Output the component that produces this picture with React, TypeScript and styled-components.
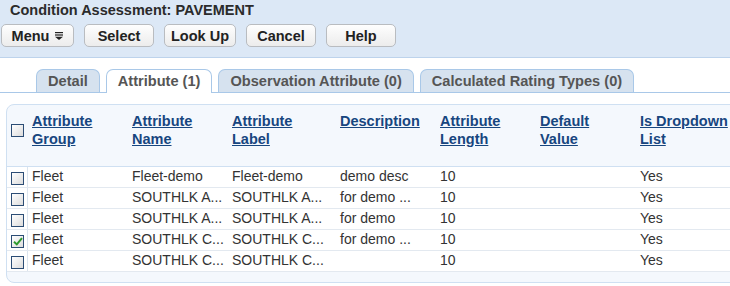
import React from "react";
import styled, { createGlobalStyle } from "styled-components";

const Global = createGlobalStyle`
  html, body { margin: 0; padding: 0; background: #ffffff; overflow: hidden; }
  body { font-family: "Liberation Sans", Arial, sans-serif; color: #333; }
  * { box-sizing: border-box; }
`;

const Page = styled.div`
  width: 730px;
  height: 286px;
  overflow: hidden;
`;

const Header = styled.div`
  background: #dce8f6;
  border-bottom: 1px solid #bdd3ec;
  padding: 1px 0 10px 0;
`;

const Title = styled.div`
  padding-left: 10px;
  font-size: 14.5px;
  font-weight: bold;
  line-height: 18px;
  color: #2b2b2b;
  margin-bottom: 5px;
`;

const Toolbar = styled.div`
  display: flex;
  gap: 10px;
  padding-left: 1px;
`;

const Button = styled.button<{ $w: number }>`
  width: ${(p) => p.$w}px;
  height: 23px;
  padding: 0;
  border: 1px solid #b9bcc0;
  border-radius: 5px;
  background: linear-gradient(#fefefe, #ececec);
  font-family: "Liberation Sans", Arial, sans-serif;
  font-size: 14.5px;
  font-weight: bold;
  color: #222;
  display: flex;
  align-items: center;
  justify-content: center;
  gap: 6px;
`;

const Tabs = styled.div`
  margin-top: 11px;
  display: flex;
  gap: 6px;
  padding-left: 36px;
  border-bottom: 1px solid #a9c8e8;
  height: 24px;
`;

const Tab = styled.div<{ $active?: boolean }>`
  height: ${(p) => (p.$active ? "24px" : "23px")};
  padding: 0 11px;
  border: 1px solid #a9c8e8;
  border-bottom: none;
  border-radius: 7px 7px 0 0;
  background: ${(p) => (p.$active ? "#ffffff" : "#d6e2ef")};
  font-size: 14.6px;
  font-weight: bold;
  color: #555;
  line-height: 22px;
  white-space: nowrap;
`;

const Panel = styled.div`
  margin: 11px -20px 0 6px;
  border: 1px solid #cfe0f2;
  border-radius: 8px 0 0 8px;
  background: #f4f8fd;
  padding-bottom: 10px;
`;

const cols = "21px 100px 100px 108px 100px 100px 100px 1fr";

const HeadRow = styled.div`
  display: grid;
  grid-template-columns: ${cols};
  height: 62px;
  border-bottom: 1px solid #cfe0f2;
  padding-top: 7px;
`;

const HeadCell = styled.div`
  padding-left: 4px;
`;

const HeadLink = styled.a`
  font-size: 14.5px;
  font-weight: bold;
  line-height: 18px;
  color: #17467f;
  text-decoration: underline;
  display: block;
`;

const Row = styled.div`
  display: grid;
  grid-template-columns: ${cols};
  height: 21px;
  background: #ffffff;
  border-bottom: 1px solid #e3e9f0;
`;

const CheckCell = styled.div<{ $ruled?: boolean }>`
  padding-left: 4px;
  padding-top: ${(p) => (p.$ruled ? "5px" : "12px")};
  border-right: ${(p) => (p.$ruled ? "1px solid #dbe4ee" : "none")};
`;

const Cell = styled.div`
  padding-left: 4px;
  font-size: 14px;
  line-height: 19px;
  color: #333;
  white-space: nowrap;
  overflow: hidden;
`;

const Box = styled.div`
  width: 13px;
  height: 13px;
  border: 1px solid #2c4d75;
  background: linear-gradient(135deg, #ffffff, #dcdcdc);
  display: flex;
  align-items: center;
  justify-content: center;
`;

const MenuIcon = () => (
  <svg width="8" height="8" viewBox="0 0 8 8">
    <rect x="0" y="0" width="8" height="1.2" fill="#222" />
    <rect x="0" y="2.4" width="8" height="1.2" fill="#222" />
    <polygon points="0,4.8 8,4.8 4,8" fill="#222" />
  </svg>
);

const Check = () => (
  <svg width="10" height="9" viewBox="0 0 10 9">
    <path d="M1 4.8 L3.8 7.4 L9 1.2" stroke="#2e9a2e" strokeWidth="2" fill="none" />
  </svg>
);

const headers: [string, string][] = [
  ["Attribute", "Group"],
  ["Attribute", "Name"],
  ["Attribute", "Label"],
  ["Description", ""],
  ["Attribute", "Length"],
  ["Default", "Value"],
  ["Is Dropdown", "List"],
];

const rows: { checked: boolean; v: string[] }[] = [
  { checked: false, v: ["Fleet", "Fleet-demo", "Fleet-demo", "demo desc", "10", "", "Yes"] },
  { checked: false, v: ["Fleet", "SOUTHLK A...", "SOUTHLK A...", "for demo ...", "10", "", "Yes"] },
  { checked: false, v: ["Fleet", "SOUTHLK A...", "SOUTHLK A...", "for demo", "10", "", "Yes"] },
  { checked: true, v: ["Fleet", "SOUTHLK C...", "SOUTHLK C...", "for demo ...", "10", "", "Yes"] },
  { checked: false, v: ["Fleet", "SOUTHLK C...", "SOUTHLK C...", "", "10", "", "Yes"] },
];

export default function App() {
  return (
    <Page>
      <Global />
      <Header>
        <Title>Condition Assessment: PAVEMENT</Title>
        <Toolbar>
          <Button $w={73}>
            Menu <MenuIcon />
          </Button>
          <Button $w={70}>Select</Button>
          <Button $w={72}>Look Up</Button>
          <Button $w={70}>Cancel</Button>
          <Button $w={70}>Help</Button>
        </Toolbar>
      </Header>
      <Tabs>
        <Tab>Detail</Tab>
        <Tab $active>Attribute (1)</Tab>
        <Tab>Observation Attribute (0)</Tab>
        <Tab>Calculated Rating Types (0)</Tab>
      </Tabs>
      <Panel>
        <HeadRow>
          <CheckCell>
            <Box />
          </CheckCell>
          {headers.map(([a, b], i) => (
            <HeadCell key={i}>
              <HeadLink>{a}</HeadLink>
              {b && <HeadLink>{b}</HeadLink>}
            </HeadCell>
          ))}
        </HeadRow>
        {rows.map((r, i) => (
          <Row key={i}>
            <CheckCell $ruled>
              <Box>{r.checked && <Check />}</Box>
            </CheckCell>
            {r.v.map((t, j) => (
              <Cell key={j}>{t}</Cell>
            ))}
          </Row>
        ))}
      </Panel>
    </Page>
  );
}
